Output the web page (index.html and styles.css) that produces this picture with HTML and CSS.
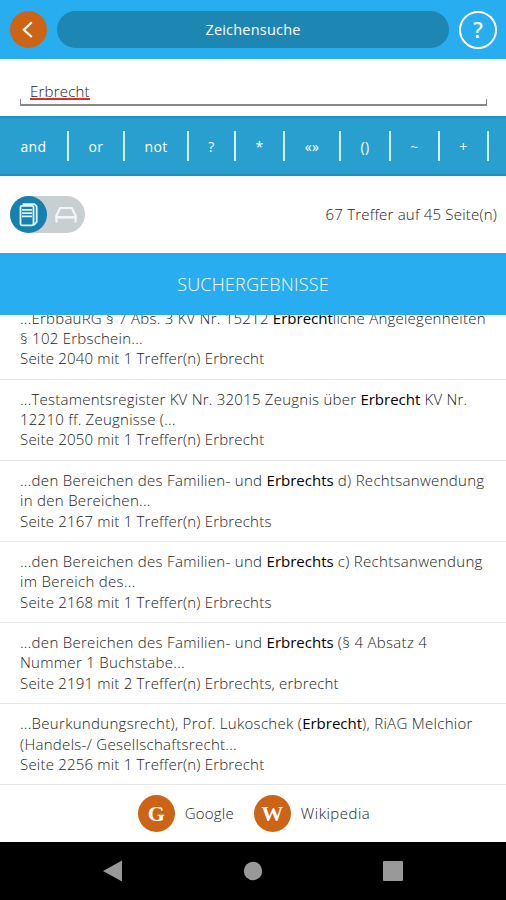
FILE: index.html
```html
<!DOCTYPE html>
<html lang="de">
<head>
    <meta charset="UTF-8">
    <meta name="viewport" content="width=device-width, initial-scale=1.0">
    <title>Zeichensuche</title>
    <link rel="stylesheet" href="styles.css">
</head>
<body>
    <header class="topbar">
        <button class="round-btn" aria-label="Zurück">
            <svg width="37" height="37" viewBox="0 0 37 37"><path d="M21.8 11.3 13.8 18.7 21.8 26" fill="none" stroke="#fff" stroke-width="2.2"/></svg>
        </button>
        <h1 class="title">Zeichensuche</h1>
        <button class="help-btn">?</button>
    </header>

    <div class="search">
        <div class="search-field"><span class="search-text">Erbrecht</span></div>
    </div>

    <nav class="operators">
        <span>and</span>
        <span>or</span>
        <span>not</span>
        <span>?</span>
        <span>*</span>
        <span>«»</span>
        <span>()</span>
        <span>~</span>
        <span>+</span>
    </nav>

    <div class="summary">
        <div class="toggle">
            <div class="toggle-on">
                <svg width="37" height="37" viewBox="0 0 37 37" fill="none" stroke="#e4f4fb" stroke-width="1.8">
                    <path d="M12.5 8.2h12l2.2 2.3v15.5l-3 3.2"/>
                    <rect x="10.5" y="9.8" width="13" height="19.5" rx="1.5"/>
                    <path d="M12 13.8h10M12 17.2h10M12 20.3h10"/>
                </svg>
            </div>
            <svg class="toggle-off" width="37" height="37" viewBox="0 0 37 37" fill="none" stroke="#f3f6f6" stroke-width="2.2">
                <path d="M9 20.5 13.2 12h11.6l4.2 8.5M9.5 19.5v7M28.5 19.5v7"/>
                <path d="M8.5 21.3h21" stroke-width="2.6"/>
            </svg>
        </div>
        <span class="count">67 Treffer auf 45 Seite(n)</span>
    </div>

    <h2 class="results-title">SUCHERGEBNISSE</h2>

    <div class="results">
        <div class="result">
            <p class="wide">...ErbbauRG § 7 Abs. 3 KV Nr. 15212 <b>Erbrecht</b>liche Angelegenheiten<br>§ 102 Erbschein...</p>
            <p class="meta">Seite 2040 mit 1 Treffer(n) Erbrecht</p>
        </div>
        <div class="result">
            <p class="wide">...Testamentsregister KV Nr. 32015 Zeugnis über <b>Erbrecht</b> KV Nr.<br>12210 ff. Zeugnisse (...</p>
            <p class="meta">Seite 2050 mit 1 Treffer(n) Erbrecht</p>
        </div>
        <div class="result">
            <p>...den Bereichen des Familien- und <b>Erbrechts</b> d) Rechtsanwendung<br>in den Bereichen...</p>
            <p class="meta">Seite 2167 mit 1 Treffer(n) Erbrechts</p>
        </div>
        <div class="result">
            <p>...den Bereichen des Familien- und <b>Erbrechts</b> c) Rechtsanwendung<br>im Bereich des...</p>
            <p class="meta">Seite 2168 mit 1 Treffer(n) Erbrechts</p>
        </div>
        <div class="result">
            <p>...den Bereichen des Familien- und <b>Erbrechts</b> (§ 4 Absatz 4<br>Nummer 1 Buchstabe...</p>
            <p class="meta">Seite 2191 mit 2 Treffer(n) Erbrechts, erbrecht</p>
        </div>
        <div class="result">
            <p>...Beurkundungsrecht), Prof. Lukoschek (<b>Erbrecht</b>), RiAG Melchior<br>(Handels-/ Gesellschaftsrecht...</p>
            <p class="meta">Seite 2256 mit 1 Treffer(n) Erbrecht</p>
        </div>
    </div>

    <footer class="external">
        <span class="badge">G</span>
        <span class="label google">Google</span>
        <span class="badge">W</span>
        <span class="label wikipedia">Wikipedia</span>
    </footer>

    <div class="navbar">
        <svg width="20" height="22" viewBox="0 0 20 22"><path d="M0 11 19 .5v21z" fill="#999"/></svg>
        <svg width="20" height="20" viewBox="0 0 20 20"><circle cx="10" cy="10" r="9.2" fill="#999"/></svg>
        <svg width="20" height="20" viewBox="0 0 20 20"><rect width="20" height="20" rx="1" fill="#999"/></svg>
    </div>
</body>
</html>
```
FILE: styles.css
```css
* {
    box-sizing: border-box;
}
body {
    margin: 0;
    height: 900px;
    display: flex;
    flex-direction: column;
    overflow: hidden;
    background: #fff;
    color: #222;
    font-family: "Open Sans", sans-serif;
    font-size: 15px;
    font-weight: 300;
    letter-spacing: 0.2px;
}
h1, h2, p {
    margin: 0;
}
button {
    padding: 0;
    border: none;
    font-family: inherit;
}
.topbar {
    flex: none;
    height: 59px;
    padding: 0 9px 0 10px;
    display: flex;
    align-items: center;
    gap: 10px;
    background: #27adf0;
}
.round-btn {
    width: 37px;
    height: 37px;
    border-radius: 50%;
    background: #cc6315;
}
.round-btn svg {
    display: block;
}
.title {
    flex: 1;
    height: 37px;
    line-height: 38px;
    border-radius: 19px;
    background: #1d86b3;
    color: #fff;
    font-size: 14.5px;
    font-weight: 500;
    text-align: center;
}
.help-btn {
    width: 38px;
    height: 38px;
    border: 2px solid #fff;
    border-radius: 50%;
    background: none;
    color: #fff;
    font-size: 21px;
    font-weight: 600;
    line-height: 32px;
}
.search {
    flex: none;
    height: 57px;
    padding: 0 19px 0 20px;
}
.search-field {
    height: 47px;
    padding: 22px 10px 0;
    border-bottom: 2px solid #888;
    background: linear-gradient(#888, #888) left bottom / 1px 5px no-repeat,
        linear-gradient(#888, #888) right bottom / 1px 5px no-repeat;
}
.search-text {
    display: inline-block;
    height: 19px;
    line-height: 20px;
    border-bottom: 2px solid #e32b2b;
}
.operators {
    flex: none;
    height: 60px;
    display: grid;
    grid-template-columns: 69px 56px 64px 47px 49px 56px 50px 49px 49px;
    align-items: center;
    border-top: 2px solid #1c91c2;
    border-bottom: 2px solid #208fbd;
    background: #299fd0;
    color: #fff;
    font-size: 14px;
    font-weight: 500;
    letter-spacing: 0.4px;
}
.operators span {
    height: 30px;
    line-height: 31px;
    border-right: 2px solid #d3effa;
    text-align: center;
}
.summary {
    flex: none;
    height: 77px;
    padding: 0 9px 0 10px;
    display: flex;
    align-items: center;
    justify-content: space-between;
}
.toggle {
    width: 75px;
    height: 37px;
    display: flex;
    border-radius: 19px;
    background: #c7cfd1;
}
.toggle-on {
    width: 37px;
    height: 37px;
    border-radius: 50%;
    background: #1680af;
}
.count {
    padding-bottom: 2px;
}
.results-title {
    flex: none;
    height: 62px;
    line-height: 63px;
    background: #27adf0;
    color: #fff;
    font-size: 18px;
    font-weight: 300;
    text-align: center;
}
/* list is scrolled, the first entry is cut at the top */
.results {
    flex: none;
    height: 470px;
    display: flex;
    flex-direction: column;
    justify-content: flex-end;
    overflow: hidden;
}
.result {
    flex: none;
    height: 81.1px;
    padding: 9.3px 20px 0;
    border-bottom: 1px solid #e6e6e6;
    line-height: 20.3px;
    letter-spacing: 0.3px;
    white-space: nowrap;
}
.result b {
    color: #000;
    font-weight: 500;
    letter-spacing: 0;
}
.result .wide {
    letter-spacing: 0.24px;
}
.result .meta {
    letter-spacing: 0.2px;
}
.external {
    flex: none;
    height: 57px;
    padding-left: 2px;
    display: flex;
    align-items: center;
    justify-content: center;
    gap: 10px;
}
.label {
    padding-bottom: 2px;
}
.badge {
    width: 37px;
    height: 37px;
    line-height: 37px;
    border-radius: 50%;
    background: #cc6315;
    color: #fff;
    font-family: "Liberation Serif", serif;
    font-size: 22px;
    font-weight: 700;
    text-align: center;
}
.google {
    margin-right: 10px;
}
.wikipedia {
    letter-spacing: 0.5px;
}
.navbar {
    flex: 1;
    padding: 0 103px;
    display: flex;
    align-items: center;
    justify-content: space-between;
    background: #000;
}
```
